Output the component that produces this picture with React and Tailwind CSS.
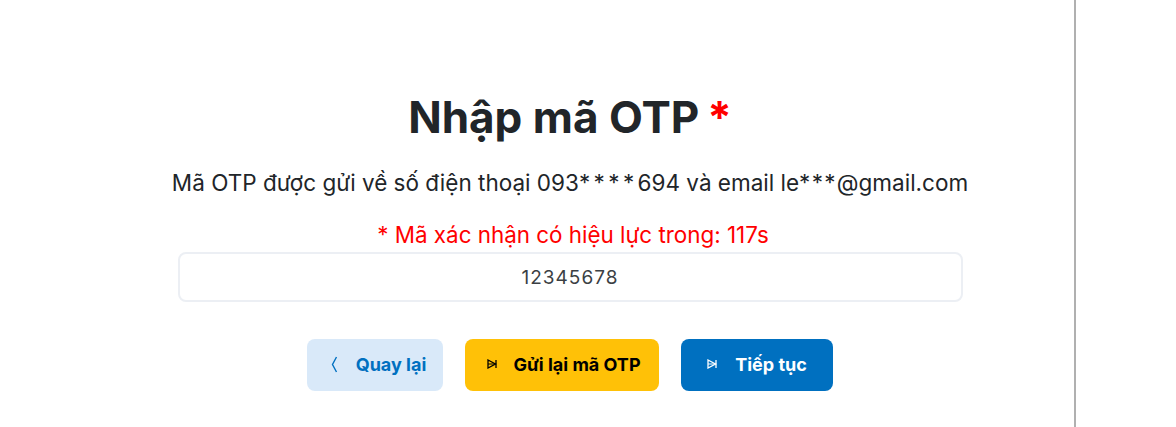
import React from "react";

const PlayIcon = () => (
  <svg width="10" height="10" viewBox="0 0 10 10" fill="none" stroke="currentColor" strokeWidth="1.3" className="shrink-0">
    <path d="M1 1 L8.5 5 L1 9 Z" />
    <path d="M9 1 V9" />
    <path d="M1 5 H9" strokeWidth="1" />
  </svg>
);

const BackIcon = () => (
  <svg width="7" height="17" viewBox="0 0 7 17" fill="none" stroke="currentColor" strokeWidth="1.4" className="shrink-0">
    <path d="M5.5 1 L1.5 8.5 L5.5 16" />
  </svg>
);

const App = () => {
  return (
    <div className="h-[427px] w-[1176px] overflow-hidden bg-white font-['Inter',sans-serif]">
      <div className="flex h-full w-[1076px] flex-col items-center border-r-2 border-[#b0b0b0] pt-[90px] pl-[66px]">
        <h1 className="flex text-[44px] leading-[54px] font-bold text-[#212529]">
          Nhập mã OTP
          <span className="ml-[8px] text-[#ff0000]">*</span>
        </h1>
        <p className="mt-[24px] text-[22.5px] leading-[30px] text-[#212529]">
          Mã OTP được gửi về số điện thoại 093
          <span className="tracking-[3.4px]">****</span>694 và email le
          <span className="tracking-[1.3px]">***</span>@gmail.com
        </p>
        <p className="mt-[22px] ml-[6px] text-[22.4px] leading-[30px] text-[#ff0000]">
          * Mã xác nhận có hiệu lực trong: 117s
        </p>
        <input
          readOnly
          value="12345678"
          className="mt-[2px] h-[50px] w-[785px] rounded-[8px] border-2 border-[#eceff4] text-center text-[19px] tracking-[1px] text-[#3b3f44] outline-none"
        />
        <div className="mt-[37px] flex gap-[22px]">
          <button className="flex h-[52px] w-[136px] items-center justify-center gap-[18px] rounded-[8px] bg-[#d9e9f9] pb-[2px] pl-[7px] text-[18px] font-bold text-[#0070c0]">
            <BackIcon />
            Quay lại
          </button>
          <button className="flex h-[52px] w-[194px] items-center justify-center gap-[16px] rounded-[8px] bg-[#ffc107] pb-[2px] pl-[4px] text-[18px] font-bold text-black">
            <PlayIcon />
            Gửi lại mã OTP
          </button>
          <button className="flex h-[52px] w-[152px] items-center justify-center gap-[18px] rounded-[8px] bg-[#0070c0] pb-[2px] text-[18px] font-bold text-white">
            <PlayIcon />
            Tiếp tục
          </button>
        </div>
      </div>
    </div>
  );
};

export default App;
